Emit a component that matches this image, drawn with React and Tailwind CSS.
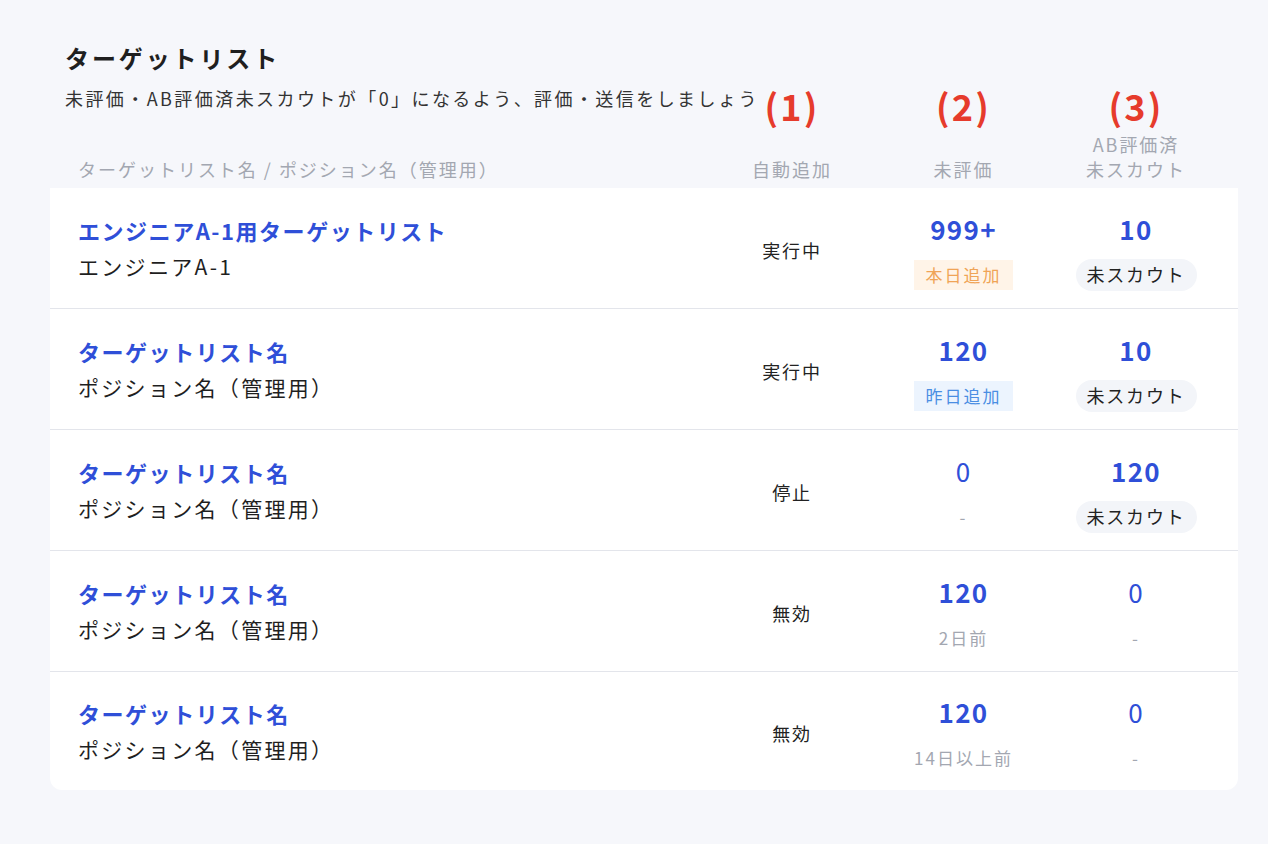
const rows = [
  {
    name: 'エンジニアA-1用ターゲットリスト',
    position: 'エンジニアA-1',
    status: '実行中',
    pending: { value: '999+', bold: true, tag: { label: '本日追加', tone: 'orange' } },
    unscouted: { value: '10', bold: true, pill: true },
  },
  {
    name: 'ターゲットリスト名',
    position: 'ポジション名（管理用）',
    status: '実行中',
    pending: { value: '120', bold: true, tag: { label: '昨日追加', tone: 'blue' } },
    unscouted: { value: '10', bold: true, pill: true },
  },
  {
    name: 'ターゲットリスト名',
    position: 'ポジション名（管理用）',
    status: '停止',
    pending: { value: '0', bold: false, note: '-' },
    unscouted: { value: '120', bold: true, pill: true },
  },
  {
    name: 'ターゲットリスト名',
    position: 'ポジション名（管理用）',
    status: '無効',
    pending: { value: '120', bold: true, note: '2日前' },
    unscouted: { value: '0', bold: false, note: '-' },
  },
  {
    name: 'ターゲットリスト名',
    position: 'ポジション名（管理用）',
    status: '無効',
    pending: { value: '120', bold: true, note: '14日以上前' },
    unscouted: { value: '0', bold: false, note: '-' },
  },
];

const font = { fontFamily: '"Noto Sans CJK JP", "Noto Sans", sans-serif' };

const Tag = ({ label, tone }) => (
  <span
    className={
      tone === 'orange'
        ? 'h-[30px] px-[11px] flex items-center text-[17px] tracking-[0.12em] bg-[#fff4e8] text-[#f0a457]'
        : 'h-[30px] px-[11px] flex items-center text-[17px] tracking-[0.12em] bg-[#ecf4fe] text-[#4a8ee3]'
    }
  >
    {label}
  </span>
);

const CountCell = ({ value, bold, tag, note, pill }) => (
  <div className="pt-[6px] flex flex-col items-center">
    <span
      className={
        bold
          ? 'h-[34px] leading-[34px] text-[26px] font-bold tracking-[0.05em] text-[#2f4fd8]'
          : 'h-[34px] leading-[34px] text-[26px] font-normal tracking-[0.05em] text-[#2f4fd8]'
      }
    >
      {value}
    </span>
    <div className="mt-[13px] h-[32px] flex items-center">
      {tag && <Tag {...tag} />}
      {pill && (
        <span className="h-[32px] px-[11px] rounded-full flex items-center bg-[#f3f5f9] text-[#222] text-[18px] tracking-[0.1em]">
          未スカウト
        </span>
      )}
      {note && <span className="text-[17px] tracking-[0.12em] text-[#a3a7b1]">{note}</span>}
    </div>
  </div>
);

export default function App() {
  return (
    <div className="min-h-[844px] bg-[#f6f7fb] pl-[50px] pr-[30px] pt-[40px]" style={font}>
      <h1 className="pl-[15px] text-[24px] leading-[36px] font-bold tracking-[0.12em] text-[#1f1f1f]">
        ターゲットリスト
      </h1>

      <div className="mt-[8px] grid grid-cols-[minmax(0,1fr)_168px_175px_170px] pr-[17px] items-start">
        <p className="pl-[15px] whitespace-nowrap text-[18px] leading-[28px] tracking-[0.135em] text-[#333]">
          未評価・AB評価済未スカウトが「0」になるよう、評価・送信をしましょう
        </p>
        {['(1)', '(2)', '(3)'].map((n) => (
          <span
            key={n}
            className="text-center text-[36px] leading-[42px] font-bold tracking-[0.06em] text-[#e63b2c]"
          >
            {n}
          </span>
        ))}
      </div>

      <div className="mt-[6px] grid grid-cols-[minmax(0,1fr)_168px_175px_170px] pr-[17px] items-end pb-[6px] text-[18px] leading-[25px] tracking-[0.11em] text-[#a3a7b1]">
        <span className="pl-[28px]">ターゲットリスト名 / ポジション名（管理用）</span>
        <span className="text-center">自動追加</span>
        <span className="text-center">未評価</span>
        <span className="text-center">
          AB評価済
          <br />
          未スカウト
        </span>
      </div>

      <div className="bg-white rounded-b-xl">
        {rows.map((row, i) => (
          <div
            key={i}
            className={
              i < rows.length - 1
                ? 'grid grid-cols-[minmax(0,1fr)_168px_175px_170px] pr-[17px] h-[121px] items-center border-b border-[#e3e5eb]'
                : 'grid grid-cols-[minmax(0,1fr)_168px_175px_170px] pr-[17px] h-[118px] items-center'
            }
          >
            <div className="pl-[28px] flex flex-col">
              <span className="text-[22px] leading-[36px] font-bold tracking-[0.07em] text-[#2f4fd8]">
                {row.name}
              </span>
              <span className="text-[21px] leading-[36px] tracking-[0.11em] text-[#1f1f1f]">
                {row.position}
              </span>
            </div>
            <span className="pt-[4px] text-center text-[18px] tracking-[0.1em] text-[#222]">{row.status}</span>
            <CountCell {...row.pending} />
            <CountCell {...row.unscouted} />
          </div>
        ))}
      </div>
    </div>
  );
}
